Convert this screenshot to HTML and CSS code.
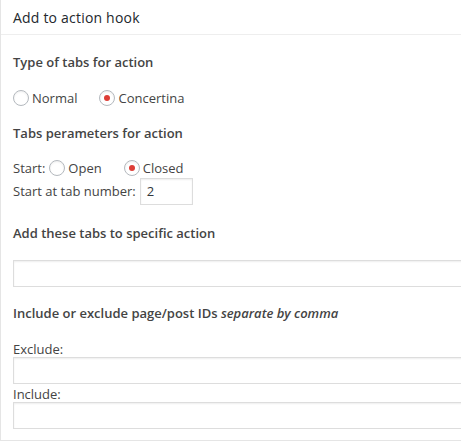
FILE: index.html
```html
<!DOCTYPE html>
<html>
<head>
<meta charset="utf-8">
<link rel="stylesheet" href="styles.css">
</head>
<body>
<div class="postbox">
  <h2 class="hndle">Add to action hook</h2>
  <div class="inside">
    <p class="label">Type of tabs for action</p>
    <div class="radios">
      <label class="opt"><span class="radio"></span>Normal</label>
      <label class="opt"><span class="radio checked"></span>Concertina</label>
    </div>
    <p class="label second">Tabs perameters for action</p>
    <div class="radios start">
      <span class="start-label">Start:</span>
      <label class="opt"><span class="radio"></span>Open</label>
      <label class="opt"><span class="radio checked"></span>Closed</label>
    </div>
    <div class="tabnum">
      <span class="tabnum-label">Start at tab number:</span>
      <span class="input small">2</span>
    </div>
    <p class="label third">Add these tabs to specific action</p>
    <div class="input wide"></div>
    <p class="label fourth">Include or exclude page/post IDs <em>separate by comma</em></p>
    <div class="field">Exclude:</div>
    <div class="input wide"></div>
    <div class="field">Include:</div>
    <div class="input wide"></div>
  </div>
</div>
</body>
</html>
```
FILE: styles.css
```css
html, body {
  margin: 0;
  padding: 0;
  background: #fff;
}
body {
  font-family: "Open Sans", sans-serif;
  font-size: 13px;
  color: #444;
  line-height: 1.4;
}
.postbox {
  width: 520px;
  border: 1px solid #e5e5e5;
  border-top: none;
  box-shadow: 0 1px 1px rgba(0,0,0,0.04);
}
.hndle {
  margin: 0;
  font-size: 14px;
  letter-spacing: 0.2px;
  font-weight: 400;
  color: #23282d;
  padding: 8px 12px;
  height: 18px;
  line-height: 19px;
  border-bottom: 1px solid #eee;
}
.inside {
  padding: 0 12px 11px 12px;
}
.label {
  font-weight: 600;
  margin: 18px 0 0 0;
  line-height: 18px;
}
.radios {
  display: flex;
  align-items: center;
  margin-top: 18px;
  height: 18px;
}
.opt {
  display: flex;
  align-items: center;
  margin-right: 22px;
}
.radio {
  width: 14px;
  height: 14px;
  border: 1px solid #b4b9be;
  border-radius: 50%;
  margin-right: 3px;
  display: inline-flex;
  align-items: center;
  justify-content: center;
  box-shadow: inset 0 1px 2px rgba(0,0,0,0.07);
}
.radio.checked::after {
  content: "";
  width: 6px;
  height: 6px;
  border-radius: 50%;
  background: #dd3d36;
}
.label.second {
  margin-top: 17px;
}
.radios.start {
  margin-top: 17px;
}
.start-label {
  margin-right: 4px;
}
.start .opt + .opt {
  margin-left: 0;
}
.start .opt {
  margin-right: 22px;
}
.tabnum {
  display: flex;
  align-items: center;
  margin-top: 1px;
}
.tabnum-label {
  margin-right: 4px;
}
.input {
  border: 1px solid #ddd;
  box-shadow: inset 0 1px 2px rgba(0,0,0,0.07);
  background: #fff;
  box-sizing: border-box;
}
.input.small {
  width: 53px;
  height: 27px;
  padding: 3px 6px;
  line-height: 19px;
  color: #32373c;
}
.input.wide {
  width: 100%;
  height: 27px;
}
.label.third {
  margin-top: 19px;
}
.label.third + .input {
  margin-top: 18px;
}
.label.fourth {
  margin-top: 17px;
}
.field {
  line-height: 16px;
  margin-top: 2px;
}
.label.fourth + .field {
  margin-top: 19px;
}
.field + .input {
  margin-top: 0;
}
```
